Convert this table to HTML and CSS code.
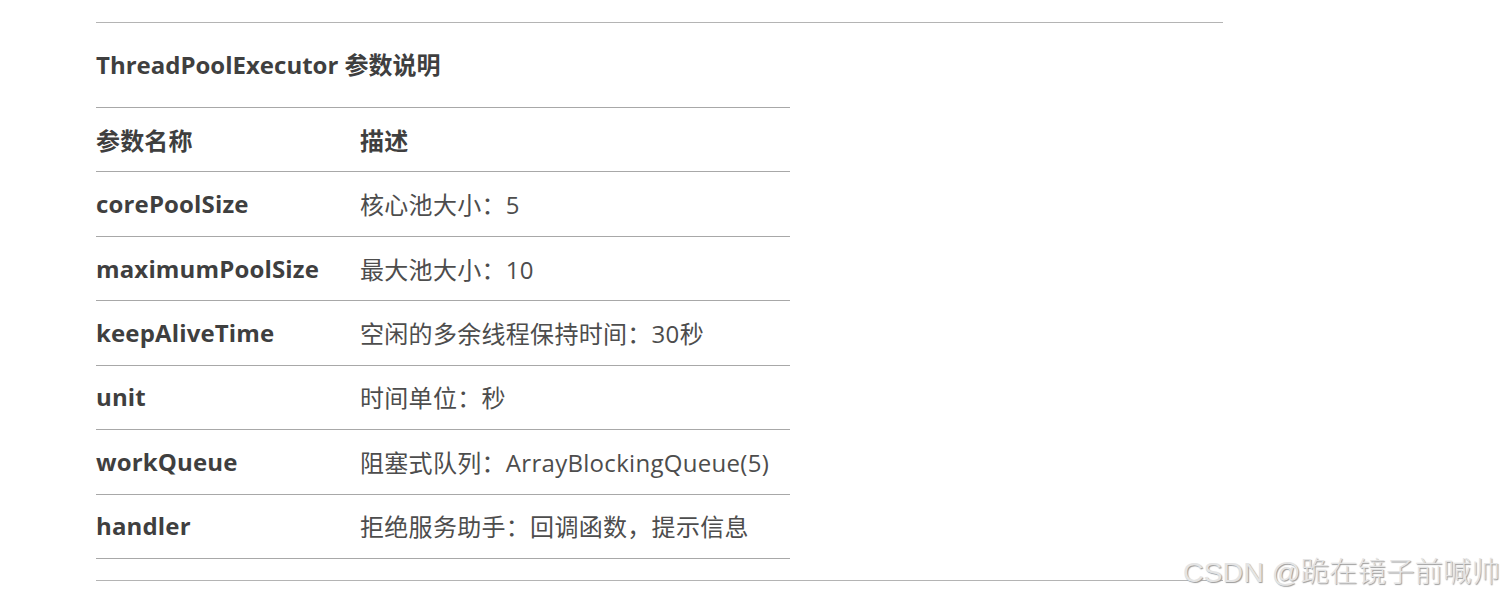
FILE: index.html
```html
<!DOCTYPE html>
<html lang="zh-CN">
<head>
<meta charset="utf-8">
<title>ThreadPoolExecutor 参数说明</title>
<link rel="stylesheet" href="styles.css">
</head>
<body>
<main class="page">
  <hr class="rule">
  <h3 class="title">ThreadPoolExecutor 参数说明</h3>
  <div class="table">
    <div class="row head"><div class="c1">参数名称</div><div class="c2">描述</div></div>
    <div class="row"><div class="c1">corePoolSize</div><div class="c2">核心池大小：5</div></div>
    <div class="row"><div class="c1">maximumPoolSize</div><div class="c2">最大池大小：10</div></div>
    <div class="row"><div class="c1">keepAliveTime</div><div class="c2">空闲的多余线程保持时间：30秒</div></div>
    <div class="row"><div class="c1">unit</div><div class="c2">时间单位：秒</div></div>
    <div class="row"><div class="c1">workQueue</div><div class="c2">阻塞式队列：ArrayBlockingQueue(5)</div></div>
    <div class="row last"><div class="c1">handler</div><div class="c2">拒绝服务助手：回调函数，提示信息</div></div>
  </div>
  <hr class="rule bottom">
</main>
<div class="watermark">CSDN @跪在镜子前喊帅</div>
</body>
</html>
```
FILE: styles.css
```css
html, body {
  margin: 0;
  padding: 0;
  background: #fff;
}
body {
  font-family: "Open Sans", "Noto Sans CJK SC", sans-serif;
  color: #4d4d4d;
  width: 1506px;
  height: 598px;
  overflow: hidden;
  position: relative;
}
.page {
  padding: 22px 0 0 96px;
  width: 1127px;
}
.rule {
  margin: 0;
  border: 0;
  border-top: 1px solid #b4b4b4;
  height: 0;
}
.title {
  margin: 0;
  padding: 24px 0 24px;
  font-size: 24px;
  line-height: 36px;
  letter-spacing: 0;
  font-weight: 700;
  color: #3f3f3f;
}
.table {
  width: 694px;
}
.row {
  display: grid;
  grid-template-columns: 264px 1fr;
  align-items: center;
  box-sizing: border-box;
  height: 64.43px;
  padding-bottom: 1px;
  border-top: 1px solid #a8a8a8;
  font-size: 24px;
  letter-spacing: 0.3px;
}
.row.last {
  border-bottom: 1px solid #a8a8a8;
  height: 65.43px;
}
.c1 {
  font-weight: 700;
  color: #3f3f3f;
  letter-spacing: 0.15px;
}
.head .c2 {
  font-weight: 700;
  color: #3f3f3f;
}
.bottom {
  margin-top: 21px;
}
.watermark {
  position: absolute;
  left: 1183px;
  top: 554px;
  font-family: "Liberation Sans", "Noto Sans CJK SC", sans-serif;
  font-size: 28.5px;
  line-height: 36px;
  font-weight: 300;
  color: #e4e4e4;
  text-shadow: 1px 1px 1px #9a9a9a;
  white-space: nowrap;
}
```
